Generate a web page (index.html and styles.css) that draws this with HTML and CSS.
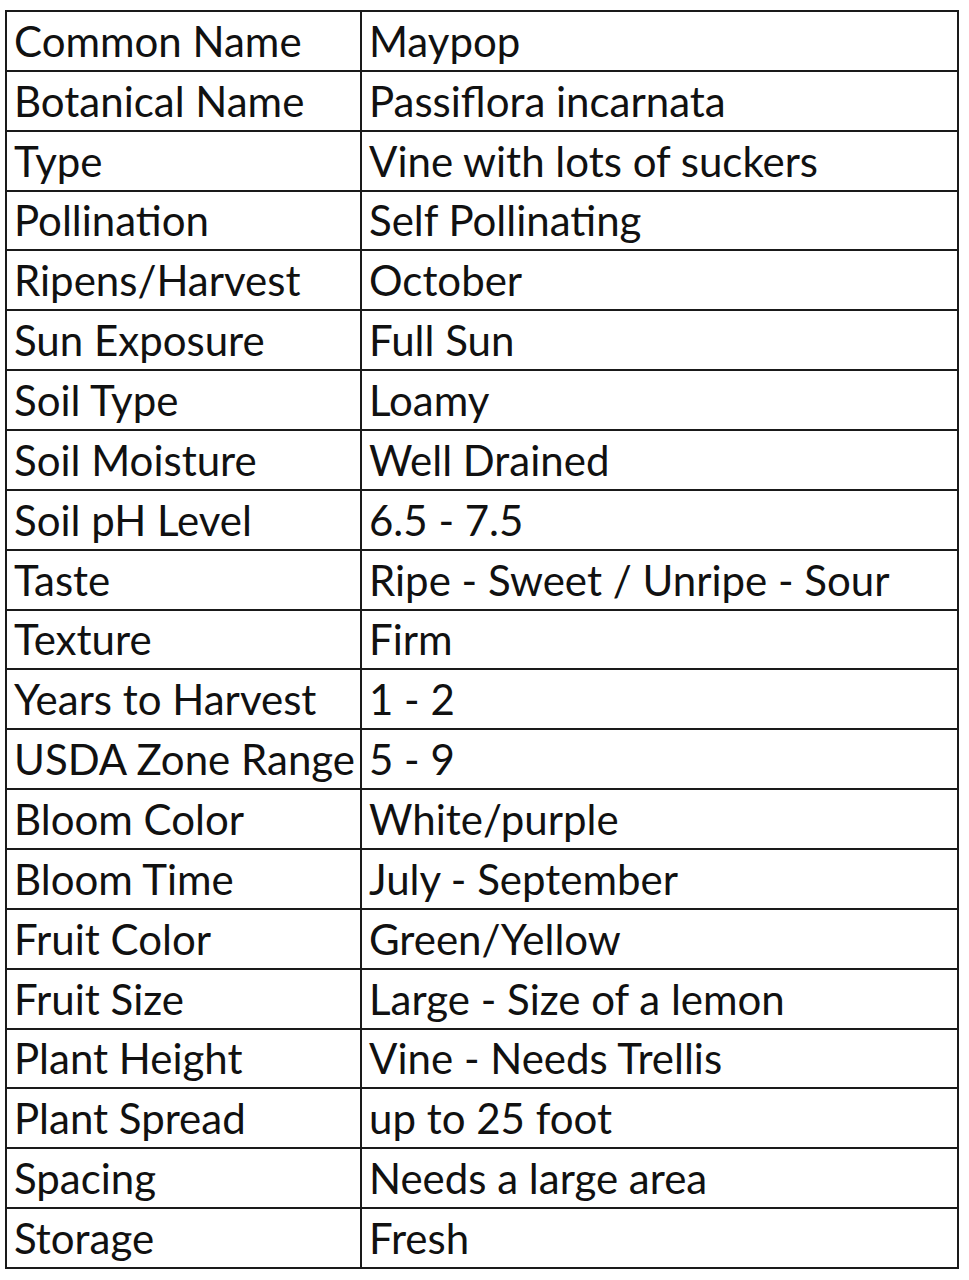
FILE: index.html
```html
<!DOCTYPE html>
<html>
<head>
<meta charset="utf-8">
<link rel="stylesheet" href="styles.css">
</head>
<body>
<table class="facts">
<colgroup><col class="c1"><col class="c2"></colgroup>
<tbody>
<tr><td>Common Name</td><td>Maypop</td></tr>
<tr><td>Botanical Name</td><td>Passiflora incarnata</td></tr>
<tr><td>Type</td><td>Vine with lots of suckers</td></tr>
<tr><td>Pollination</td><td>Self Pollinating</td></tr>
<tr><td>Ripens/Harvest</td><td>October</td></tr>
<tr><td>Sun Exposure</td><td>Full Sun</td></tr>
<tr><td>Soil Type</td><td>Loamy</td></tr>
<tr><td>Soil Moisture</td><td>Well Drained</td></tr>
<tr><td>Soil pH Level</td><td>6.5 - 7.5</td></tr>
<tr><td>Taste</td><td>Ripe - Sweet / Unripe - Sour</td></tr>
<tr><td>Texture</td><td>Firm</td></tr>
<tr><td>Years to Harvest</td><td>1 - 2</td></tr>
<tr><td>USDA Zone Range</td><td>5 - 9</td></tr>
<tr><td>Bloom Color</td><td>White/purple</td></tr>
<tr><td>Bloom Time</td><td>July - September</td></tr>
<tr><td>Fruit Color</td><td>Green/Yellow</td></tr>
<tr><td>Fruit Size</td><td>Large - Size of a lemon</td></tr>
<tr><td>Plant Height</td><td>Vine - Needs Trellis</td></tr>
<tr><td>Plant Spread</td><td>up to 25 foot</td></tr>
<tr><td>Spacing</td><td>Needs a large area</td></tr>
<tr><td>Storage</td><td>Fresh</td></tr>
</tbody>
</table>
</body>
</html>
```
FILE: styles.css
```css
html, body {
  margin: 0;
  padding: 0;
  background: #fff;
}
body {
  padding: 10px 0 0 5px;
}
.facts {
  border-collapse: collapse;
  width: 952px;
  table-layout: fixed;
  font-family: Lato, "Liberation Sans", sans-serif;
  font-size: 42px;
  color: #111;
}
.c1 { width: 355px; }
.c2 { width: 597px; }
.facts td {
  border: 2px solid #1a1a1a;
  height: 57.86px;
  padding: 0 0 0 7px;
  line-height: 57px;
  vertical-align: bottom;
  white-space: nowrap;
  overflow: hidden;
}
```
